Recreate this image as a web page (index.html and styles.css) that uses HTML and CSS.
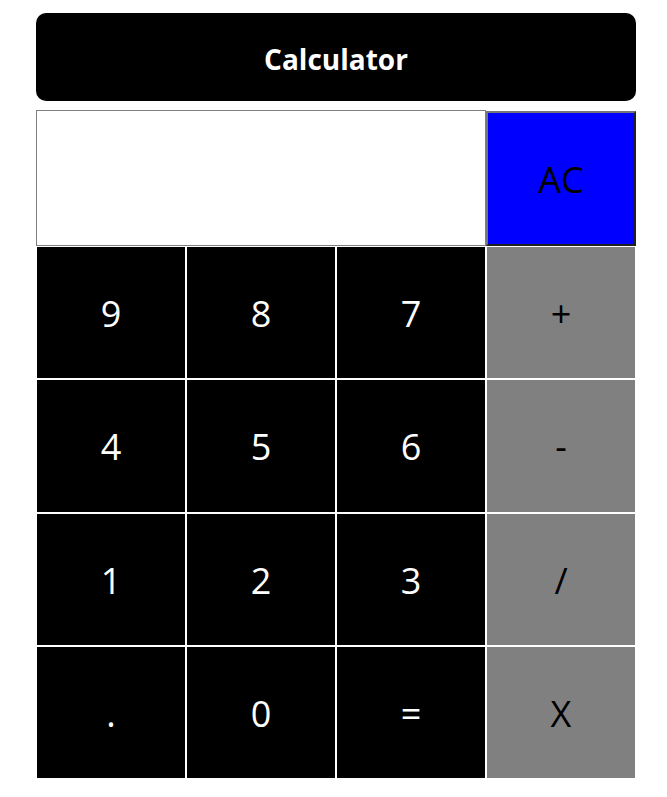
FILE: index.html
```html
<!DOCTYPE html>
<html>
<head>
<meta charset="utf-8">
<title>Calculator</title>
<link rel="stylesheet" href="styles.css">
</head>
<body>
<div class="calc">
  <div class="header">Calculator</div>
  <div class="display-row">
    <input class="display" type="text">
    <button class="btn clear">AC</button>
  </div>
  <div class="keys">
    <button class="btn num">9</button>
    <button class="btn num">8</button>
    <button class="btn num">7</button>
    <button class="btn op">+</button>
    <button class="btn num">4</button>
    <button class="btn num">5</button>
    <button class="btn num">6</button>
    <button class="btn op">-</button>
    <button class="btn num">1</button>
    <button class="btn num">2</button>
    <button class="btn num">3</button>
    <button class="btn op">/</button>
    <button class="btn num">.</button>
    <button class="btn num">0</button>
    <button class="btn num">=</button>
    <button class="btn op">X</button>
  </div>
</div>
</body>
</html>
```
FILE: styles.css
```css
html, body {
  margin: 0;
  padding: 0;
  background: #fff;
}
.calc {
  width: 600px;
  margin: 13px 0 0 36px;
  font-family: "Open Sans", "Noto Sans", sans-serif;
}
.header {
  box-sizing: border-box;
  height: 88px;
  padding-top: 3px;
  background: #000;
  color: #fff;
  border-radius: 10px;
  display: flex;
  align-items: center;
  justify-content: center;
  font-size: 28px;
  font-weight: bold;
}
.display-row {
  display: flex;
  margin-top: 9px;
  height: 136px;
}
.display {
  box-sizing: border-box;
  width: 450px;
  height: 136px;
  margin: 0;
  border: 1px solid #808080;
  padding: 0;
  background: #fff;
}
.btn {
  box-sizing: border-box;
  margin: 0;
  padding: 0;
  font-family: "Open Sans", "Noto Sans", sans-serif;
  font-size: 36px;
  font-weight: normal;
}
.clear {
  width: 150px;
  height: 135px;
  margin-top: 1px;
  background: #0000ff;
  color: #000;
  border: 2px outset #767676;
  padding-top: 2px;
}
.keys {
  display: grid;
  grid-template-columns: repeat(4, 150px);
  grid-auto-rows: 133.33px;
}
.num, .op {
  border: 1px solid #fff;
  padding-top: 2px;
}
.num {
  background: #000;
  color: #fff;
}
.op {
  background: #808080;
  color: #000;
}
```
